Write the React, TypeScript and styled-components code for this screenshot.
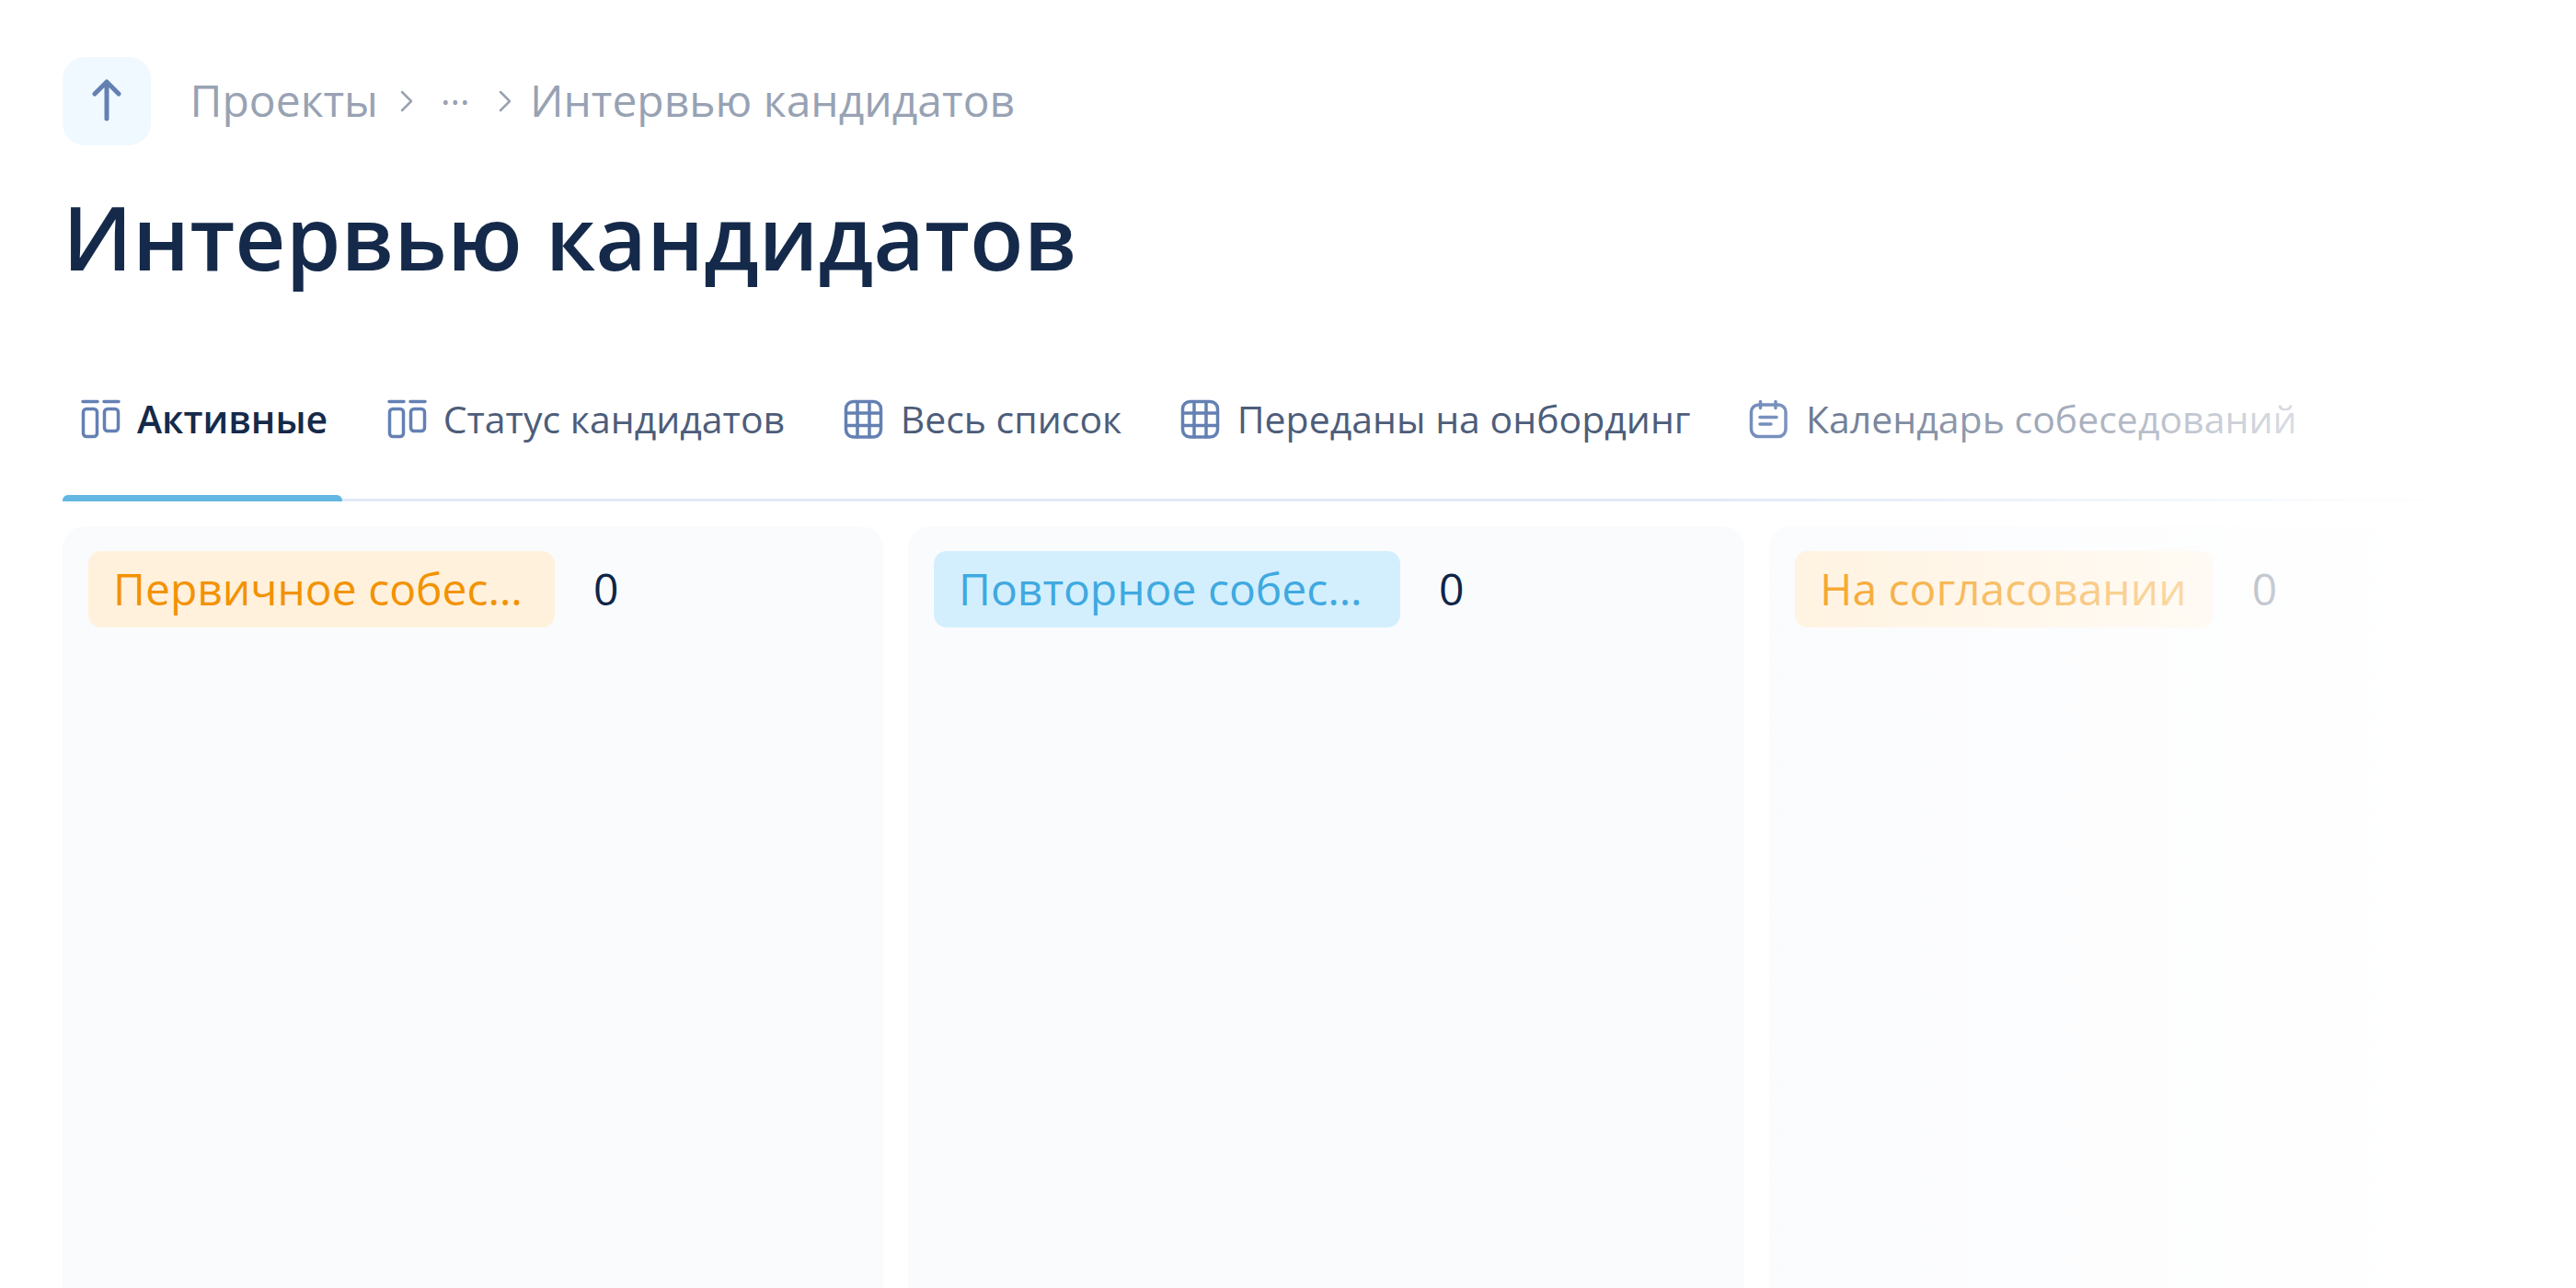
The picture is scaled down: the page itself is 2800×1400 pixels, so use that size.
import styled, { createGlobalStyle } from "styled-components";

const GlobalStyle = createGlobalStyle`
  html, body {
    margin: 0;
    padding: 0;
    background: #fff;
  }
  * {
    box-sizing: border-box;
  }
`;

const tabs = [
  { label: "Активные", icon: "board", active: true },
  { label: "Статус кандидатов", icon: "board" },
  { label: "Весь список", icon: "grid" },
  { label: "Переданы на онбординг", icon: "grid" },
  { label: "Календарь собеседований", icon: "calendar" },
];

const columns = [
  { title: "Первичное собеседование", tone: "orange", width: 892 },
  { title: "Повторное собеседование", tone: "blue", width: 909 },
  { title: "На согласовании", tone: "orange", width: 909 },
];

function TabIcon({ name }: { name: string }) {
  if (name === "board") {
    return (
      <IconSvg viewBox="0 0 48 48">
        <path d="M6 5.5h16M29 5.5h16" />
        <rect x="6.5" y="13.5" width="15" height="30" rx="3.5" />
        <rect x="29.5" y="13.5" width="15" height="24" rx="3.5" />
      </IconSvg>
    );
  }
  if (name === "grid") {
    return (
      <IconSvg viewBox="0 0 48 48">
        <rect x="5.5" y="5.5" width="38" height="38.5" rx="8" />
        <path d="M18 5.5v38.5M31 5.5v38.5M5.5 18h38M5.5 31.5h38" />
      </IconSvg>
    );
  }
  return (
    <IconSvg viewBox="0 0 48 48">
      <rect x="5.5" y="9" width="37.5" height="34.5" rx="8" />
      <path d="M15.5 5.5v7M32 5.5v7M15 22.5h18M15 30h12" />
    </IconSvg>
  );
}

function Chevron() {
  return (
    <ChevronSvg viewBox="0 0 16 24">
      <path d="M3 2l10 10-10 10" />
    </ChevronSvg>
  );
}

function App() {
  return (
    <Page>
      <GlobalStyle />
      <Breadcrumbs>
        <BackButton>
          <ArrowSvg viewBox="0 0 48 48">
            <path d="M24 3v40M11 16L24 3l13 13" />
          </ArrowSvg>
        </BackButton>
        <Crumb>Проекты</Crumb>
        <Chevron />
        <Dots>···</Dots>
        <Chevron />
        <Crumb>Интервью кандидатов</Crumb>
      </Breadcrumbs>
      <Title>Интервью кандидатов</Title>
      <TabBar>
        {tabs.map((tab) => (
          <Tab key={tab.label} $active={tab.active}>
            <TabIcon name={tab.icon} />
            {tab.label}
          </Tab>
        ))}
      </TabBar>
      <Board>
        {columns.map((column) => (
          <Column key={column.title} $width={column.width}>
            <ColumnHead>
              <Badge $tone={column.tone}>{column.title}</Badge>
              <Count>0</Count>
            </ColumnHead>
          </Column>
        ))}
      </Board>
      <FadeOut />
    </Page>
  );
}

const Page = styled.div`
  position: relative;
  display: flex;
  flex-direction: column;
  width: 100%;
  height: 100vh;
  overflow: hidden;
  padding: 62px 0 0 68px;
  background-color: #fff;
  font-family: "Open Sans", "Noto Sans", sans-serif;
`;

const Breadcrumbs = styled.div`
  display: flex;
  align-items: center;
  height: 96px;
`;

const BackButton = styled.div`
  display: flex;
  justify-content: center;
  align-items: center;
  width: 96px;
  height: 96px;
  margin-right: 24px;
  border-radius: 24px;
  background-color: #f0f9ff;
`;

const ArrowSvg = styled.svg`
  width: 48px;
  height: 48px;
  fill: none;
  stroke: #6480b3;
  stroke-width: 5;
  stroke-linecap: round;
  stroke-linejoin: round;
`;

const Crumb = styled.span`
  margin-left: 18.5px;
  padding-bottom: 3px;
  font-size: 48px;
  line-height: 64px;
  color: #98a2b3;
`;

const ChevronSvg = styled.svg`
  width: 16px;
  height: 24px;
  margin-left: 23px;
  fill: none;
  stroke: #98a2b3;
  stroke-width: 2.5;
  stroke-linecap: round;
  stroke-linejoin: round;
`;

const Dots = styled.span`
  margin: 0 8px 0 29px;
  font-size: 40px;
  font-weight: 400;
  line-height: 40px;
  color: #98a2b3;
`;

const Title = styled.h1`
  margin: 34px 0 0;
  font-size: 96px;
  font-weight: 600;
  line-height: 130px;
  color: #152a4a;
`;

const TabBar = styled.div`
  display: flex;
  column-gap: 28.5px;
  flex-shrink: 0;
  margin-top: 109px;
  padding-bottom: 63px;
  border-bottom: 3px solid #e0e9f7;
`;

const Tab = styled.div<{ $active?: boolean }>`
  position: relative;
  display: flex;
  align-items: center;
  column-gap: 17px;
  height: 48px;
  padding: 0 16px;
  font-size: 41px;
  font-weight: ${(p) => (p.$active ? 600 : 400)};
  white-space: nowrap;
  color: ${(p) => (p.$active ? "#152a4a" : "#4d5d7a")};

  ${(p) =>
    p.$active &&
    `
    &::after {
      content: "";
      position: absolute;
      left: 0;
      right: 0;
      bottom: -66px;
      height: 7px;
      border-radius: 6px 6px 0 0;
      background-color: #63b7e0;
    }
  `}
`;

const IconSvg = styled.svg`
  flex-shrink: 0;
  width: 48px;
  height: 48px;
  fill: none;
  stroke: #6480b3;
  stroke-width: 3.5;
  stroke-linecap: round;
`;

const Board = styled.div`
  display: flex;
  column-gap: 27px;
  flex: 1;
  margin-top: 27px;
`;

const Column = styled.div<{ $width: number }>`
  flex-shrink: 0;
  width: ${(p) => p.$width}px;
  padding: 27px 28px;
  border-radius: 24px 24px 0 0;
  background-color: #fafbfd;
`;

const ColumnHead = styled.div`
  display: flex;
  align-items: center;
  column-gap: 42px;
`;

const Badge = styled.div<{ $tone: string }>`
  max-width: 507px;
  height: 83px;
  padding: 0 29px 0 27px;
  overflow: hidden;
  border-radius: 14px;
  font-size: 48px;
  line-height: 81px;
  white-space: nowrap;
  text-overflow: ellipsis;
  color: ${(p) => (p.$tone === "blue" ? "#3fa9e0" : "#f39200")};
  background-color: ${(p) => (p.$tone === "blue" ? "#d3effe" : "#fff1dc")};
`;

const Count = styled.span`
  padding-bottom: 2px;
  font-size: 48px;
  line-height: 64px;
  color: #0f2547;
`;

const FadeOut = styled.div`
  position: absolute;
  top: 0;
  bottom: 0;
  left: 1815px;
  right: 0;
  background: linear-gradient(to right, rgba(255, 255, 255, 0) 0, #fff 860px);
  pointer-events: none;
`;

export default App;
